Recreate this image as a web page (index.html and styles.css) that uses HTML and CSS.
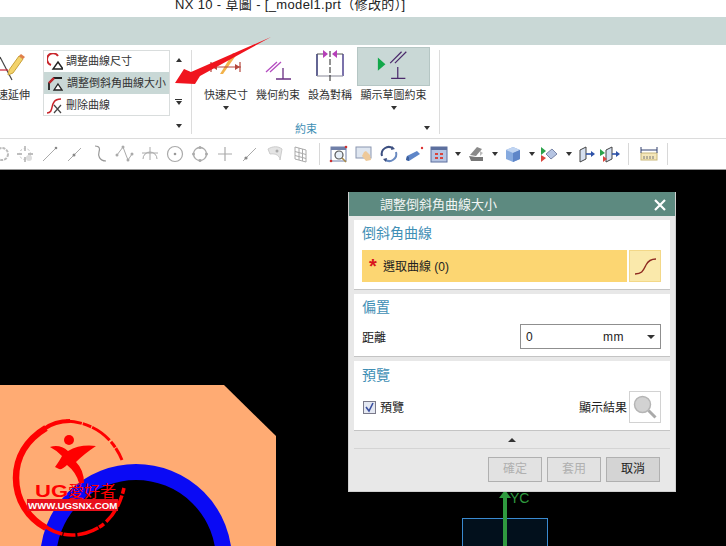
FILE: index.html
```html
<!DOCTYPE html>
<html lang="zh-Hant">
<head>
    <meta charset="UTF-8">
    <title>NX 10 - 草圖</title>
    <link rel="stylesheet" href="styles.css">
</head>
<body>
<div class="page">
    <div class="titlebar">NX 10 - 草圖 - [_model1.prt（修改的）]</div>
    <div class="tabband"></div>

    <div class="ribbon">
        <div class="tool tool-clipped">
            <svg class="tool-icon" width="44" height="39" viewBox="0 0 44 39">
                <path d="M14 10l12 23" stroke="#444" stroke-width="1.2" fill="none"/>
                <path d="M14 23h8" stroke="#c23" stroke-width="1.200" fill="none"/>
                <path d="M22 28l1-5 10-14 4 3-10 14z" fill="#f3d36b" stroke="#c9a23c" stroke-width="1"/>
                <path d="M33 9l2-2 4 3-2 2z" fill="#e07f4a"/>
            </svg>
            <span class="tool-label">快速延伸</span>
        </div>

        <div class="gallery">
            <div class="gallery-row gallery-row-first">
                <svg width="16" height="18" viewBox="0 0 16 18"><path d="M11 3a6 6 0 1 0-7 9" fill="none" stroke="#c8262c" stroke-width="2"/><path d="M11 9l5 7H6z" fill="#fff" stroke="#222" stroke-width="1.4"/></svg>
                <span>調整曲線尺寸</span>
            </div>
            <div class="gallery-row gallery-row-on">
                <svg width="16" height="18" viewBox="0 0 16 18"><path d="M2 16V9l5-5h8" fill="none" stroke="#222" stroke-width="1.8"/><path d="M2 9l5-5" stroke="#c8262c" stroke-width="2.4"/><path d="M11 10l4 6H7z" fill="#fff" stroke="#222" stroke-width="1.3"/></svg>
                <span>調整倒斜角曲線大小</span>
            </div>
            <div class="gallery-row">
                <svg width="16" height="18" viewBox="0 0 16 18"><path d="M0 17c6 0 4-7 7-11 2-3 5-3 7-3" fill="none" stroke="#c8262c" stroke-width="1.5"/><path d="M7 9l7 8M14 9l-7 8" stroke="#444" stroke-width="1.2"/></svg>
                <span>刪除曲線</span>
            </div>
        </div>

        <div class="gallery-arrows">
            <i class="tri tri-up"></i>
            <i class="tri tri-down tri-bar"></i>
            <i class="tri tri-down"></i>
        </div>

        <div class="group">
            <div class="tools">
                <div class="tool">
                    <svg class="tool-icon" width="44" height="39" viewBox="0 0 44 39">
                        <path d="M29 6l4 1-14 20-3 0z" fill="#f2b24a"/>
                        <path d="M7 20h30M7 15v10M36 15v10" stroke="#b5473c" stroke-width="1.2" fill="none"/>
                        <path d="M8 20l5-3v6zM36 20l-5-3v6z" fill="#b5473c"/>
                    </svg>
                    <span class="tool-label">快速尺寸</span>
                    <i class="tri tri-down"></i>
                </div>
                <div class="tool">
                    <svg class="tool-icon" width="44" height="39" viewBox="0 0 44 39">
                        <path d="M10 25l11-10M14 25l11-10" stroke="#b44cc0" stroke-width="1.3" fill="none"/>
                        <path d="M20 32h15M27 21v11" stroke="#6a2f83" stroke-width="1.3" fill="none"/>
                    </svg>
                    <span class="tool-label">幾何約束</span>
                </div>
                <div class="tool">
                    <svg class="tool-icon" width="44" height="39" viewBox="0 0 44 39">
                        <path d="M9 7v22" stroke="#3d3f78" stroke-width="1.6" fill="none"/>
                        <path d="M35 7v22" stroke="#5a4f96" stroke-width="1.6" fill="none"/>
                        <path d="M9 29h26" stroke="#9a9aa8" stroke-width="1.2" fill="none"/>
                        <path d="M9 7h6M29 7h6" stroke="#555" stroke-width="1" fill="none"/>
                        <path d="M22 4v30" stroke="#222" stroke-width="1" stroke-dasharray="6 2" fill="none"/>
                        <path d="M15 3l5 4-5 4zM29 3l-5 4 5 4z" fill="#b540b8"/>
                    </svg>
                    <span class="tool-label">設為對稱</span>
                </div>
                <div class="tool tool-wide">
                    <svg class="tool-icon tool-icon-on" width="73" height="39" viewBox="0 0 73 39">
                        <path d="M20 10l8 7-8 7z" fill="#12a84a"/>
                        <path d="M33 16l12-12M38 16l12-12" stroke="#4b2a6b" stroke-width="1.3" fill="none"/>
                        <path d="M34 32h15M41 20v12" stroke="#4b2a6b" stroke-width="1.3" fill="none"/>
                    </svg>
                    <span class="tool-label">顯示草圖約束</span>
                    <i class="tri tri-down"></i>
                </div>
            </div>
            <div class="group-foot">
                <span class="group-name">約束</span>
                <i class="tri tri-down"></i>
            </div>
        </div>
    </div>

    <div class="toolbar">
        <svg class="tb-first" width="12" height="20" viewBox="12 0 12 20"><circle cx="14" cy="10" r="6" fill="none" stroke="#bbb" stroke-width="2" stroke-dasharray="3 1"/></svg>
        <svg class="tb" viewBox="0 0 24 20"><path d="M12 2v5M12 18v-5M4 10h5M20 10h-5" stroke="#aaa" stroke-width="1.400"/><circle cx="12" cy="10" r="5.500" fill="none" stroke="#bbb" stroke-dasharray="2 2"/><circle cx="16" cy="14" r="3" fill="#ddd"/></svg>
        <svg class="tb" viewBox="0 0 24 20"><path d="M5 17L18 4" stroke="#aaa" stroke-width="1"/><circle cx="18" cy="4" r="1.300" fill="#888"/></svg>
        <svg class="tb" viewBox="0 0 24 20"><path d="M5 17L18 4" stroke="#aaa" stroke-width="1"/><circle cx="11" cy="11" r="1.500" fill="#888"/></svg>
        <svg class="tb" viewBox="0 0 24 20"><path d="M7 2c5 0 5 3 4 6s0 9 7 9" fill="none" stroke="#999" stroke-width="1.200"/></svg>
        <svg class="tb" viewBox="0 0 24 20"><path d="M4 11l6-8 3 8 2 5 4-6" fill="none" stroke="#aaa"/><circle cx="10" cy="3" r="1.500" fill="#aaa"/><circle cx="4" cy="11" r="1.500" fill="#aaa"/><circle cx="15" cy="16" r="1.500" fill="#aaa"/><circle cx="19" cy="10" r="1.500" fill="#aaa"/></svg>
        <svg class="tb" viewBox="0 0 24 20"><path d="M5 15a7 7 0 0 1 14 0M12 3v13M4 9h16" fill="none" stroke="#aaa"/></svg>
        <svg class="tb" viewBox="0 0 24 20"><circle cx="12" cy="10" r="7.500" fill="none" stroke="#aaa" stroke-width="1.200"/><circle cx="12" cy="10" r="1.300" fill="#999"/></svg>
        <svg class="tb" viewBox="0 0 24 20"><circle cx="12" cy="10" r="6.500" fill="none" stroke="#aaa" stroke-width="1.300"/><circle cx="12" cy="3.500" r="1.500" fill="#aaa"/><circle cx="5.500" cy="10" r="1.500" fill="#aaa"/><circle cx="18.500" cy="10" r="1.500" fill="#aaa"/><circle cx="12" cy="16.500" r="1.500" fill="#aaa"/></svg>
        <svg class="tb" viewBox="0 0 24 20"><path d="M12 3v14M5 10h14" stroke="#aaa" stroke-width="1.200"/></svg>
        <svg class="tb" viewBox="0 0 24 20"><path d="M5 17L18 4" stroke="#aaa"/><circle cx="8" cy="14" r="1.600" fill="#888"/></svg>
        <svg class="tb" viewBox="0 0 24 20"><path d="M5 5c5-3 10-3 14 0l-2 11c0-4-4-7-10-6z" fill="#e4e4e4" stroke="#ccc"/><circle cx="14" cy="7" r="1.500" fill="#aaa"/></svg>
        <svg class="tb" viewBox="0 0 24 20"><path d="M7 3l11 3v12l-11-3zM7 7.500l11 3M7 11.500l11 3M11 4v12M14.500 5v12" fill="none" stroke="#aaa"/></svg>
        <i class="tb-sep"></i>
        <svg class="tb" viewBox="0 0 24 20"><rect x="4" y="3" width="15" height="14" fill="#fff" stroke="#6f7fa8"/><path d="M4 3h15v3H4z" fill="#6f7fa8"/><circle cx="12" cy="11" r="4" fill="#e6eef7" stroke="#555" stroke-width="1.200"/><path d="M15 14l4 4" stroke="#a98a4a" stroke-width="1.600"/><circle cx="4" cy="17" r="1.300" fill="#c33"/><circle cx="19" cy="3" r="1.300" fill="#c33"/></svg>
        <svg class="tb" viewBox="3 0 24 20"><rect x="7" y="3" width="15" height="11" fill="#dfe6f0" stroke="#8a96b0"/><path d="M15 8l2-1 4 4 1 5-5 1-4-5z" fill="#eec99a"/></svg>
        <svg class="tb" viewBox="0 0 24 20"><path d="M5 12A7 7 0 0 1 16 4.500" fill="none" stroke="#3c4f80" stroke-width="2"/><path d="M19 8A7 7 0 0 1 8 15.500" fill="none" stroke="#6a8ac0" stroke-width="2"/><path d="M15 2l3 3-4 1zM9 18l-3-3 4-1z" fill="#3c4f80"/></svg>
        <svg class="tb" viewBox="0 0 24 20"><path d="M5 12l10-5 3 3-11 7-3-1z" fill="#5f86c8"/><path d="M5 12l2 1v4l-3-1z" fill="#3e5f9c"/><circle cx="20" cy="4" r="1.200" fill="#d33"/></svg>
        <svg class="tb-menu" viewBox="0 0 24 20"><rect x="4" y="3" width="16" height="15" fill="#b5c4e2" stroke="#5c6f9e"/><path d="M4 3h16v3H4z" fill="#5c6f9e"/><path d="M8 9h3v2H8zM13 9h3v2h-3zM8 13h3v2H8zM13 13h3v2h-3z" fill="#d9443c"/></svg>
        <i class="tri tri-down tb-arrow"></i>
        <svg class="tb-menu" viewBox="0 0 24 20"><path d="M6 11l7-8 5 2-6 7z" fill="#8a8a8a"/><path d="M5 12l7 1 7 0v4H7z" fill="#777"/><path d="M16 7l3 2-3 3z" fill="#bbb"/></svg>
        <i class="tri tri-down tb-arrow"></i>
        <svg class="tb-menu" viewBox="0 0 24 20"><path d="M5 6l7-3 7 3v9l-7 3-7-3z" fill="#86aadf"/><path d="M5 6l7 3 7-3-7-3z" fill="#c1d5f2"/><path d="M12 9v9l7-3V6z" fill="#5f86c8"/></svg>
        <i class="tri tri-down tb-arrow"></i>
        <svg class="tb-menu" viewBox="2 0 24 20"><path d="M10 10l6-5 5 5-6 5z" fill="#b5c4e2" stroke="#7a86a8"/><path d="M5 3l5 4-5 4z" fill="#2aa24a"/><path d="M5 11l5 3-5 4z" fill="#d9443c"/></svg>
        <i class="tri tri-down tb-arrow"></i>
        <svg class="tb-menu" viewBox="1 0 24 20"><path d="M6 6l6-3v12l-6 3z" fill="#d6e0f0" stroke="#444"/><path d="M12 10h6" stroke="#2d52a8" stroke-width="1.600"/><path d="M21 10l-4-3v6z" fill="#2d52a8"/></svg>
        <svg class="tb" viewBox="2 0 24 20"><path d="M9 6l6-3v12l-6 3z" fill="#d6e0f0" stroke="#444"/><path d="M15 10h6" stroke="#2d52a8" stroke-width="1.600"/><path d="M23 10l-4-3v6z" fill="#2d52a8"/><path d="M3 5l5 4-5 3z" fill="#2aa24a"/><path d="M6 12l4 3-4 3z" fill="#d9443c"/></svg>
        <i class="tb-sep tb-sep-2"></i>
        <svg class="tb" viewBox="0 0 24 20"><rect x="4" y="9" width="16" height="7" fill="#f5e7ba" stroke="#c9b77a"/><path d="M4 6h16M4 3v6M20 3v6" stroke="#33406e" fill="none"/><path d="M7 12v3M10 12v3M13 12v3M16 12v3" stroke="#777"/></svg>
        <i class="tb-sep tb-sep-3"></i>
    </div>

    <div class="viewport">
        <svg class="scene" width="726" height="376" viewBox="0 170 726 376">
            <path d="M0 385H224L276 436V546H0Z" fill="#ffab73"/>
            <circle cx="136" cy="560" r="88" fill="#000" stroke="#0a0af5" stroke-width="16"/>
            <path d="M505 546V498" stroke="#2f9a3f" stroke-width="4"/>
            <path d="M505 490l6 8h-12z" fill="#2f9a3f"/>
            <text class="axis-label" x="510" y="503">YC</text>
            <rect x="462.500" y="518.500" width="85" height="40" fill="#02101c" stroke="#3a8ad0"/>
            <path d="M505 518V546" stroke="#2f9a3f" stroke-width="4"/>

            <!-- watermark -->
            <path d="M46 428C26 440 16 458 16 478C16 500 28 518 46 528" fill="none" stroke="#f00" stroke-width="6.500"/>
            <path d="M44 429C52 423 60 421 70 421" fill="none" stroke="#f00" stroke-width="4"/>
            <path d="M66 421C92 422 112 436 122 460" fill="none" stroke="#f00" stroke-width="3" stroke-dasharray="16 1 9 1 22 2 7 1"/>
            <path d="M46 527C58 535 72 537 86 533C104 528 118 514 124 488" fill="none" stroke="#f00" stroke-width="3.500" stroke-dasharray="18 1 12 2 22 1 6 3"/>
            <circle cx="69" cy="440" r="5" fill="#f00"/>
            <path d="M50 447Q60 444 68 451Q80 444 96 446Q84 454 76 462Q84 470 84 483L79 483Q76 472 67 465Q62 470 59 469L55 467Q60 460 62 456Q56 450 50 447Z" fill="#f00"/>
            <rect x="27" y="499" width="91" height="12" fill="#e8101c"/>
            <text class="logo-name" x="35" y="497" textLength="33" lengthAdjust="spacingAndGlyphs">UG</text>
            <text class="logo-name logo-name-cjk" x="68" y="497">愛好者</text>
            <text class="logo-url" x="28" y="508.500">WWW.UGSNX.COM</text>
        </svg>

        <div class="dialog">
            <div class="dialog-title">
                <span class="dialog-name">調整倒斜角曲線大小</span>
                <svg class="dialog-close" width="12" height="12" viewBox="0 0 12 12"><path d="M1 1l10 10M11 1L1 11" stroke="#fff" stroke-width="2.200"/></svg>
            </div>
            <div class="dialog-body">
                <section class="panel panel-curve">
                    <h2>倒斜角曲線</h2>
                    <div class="select-row">
                        <div class="select-field"><b class="req">*</b><span class="select-text">選取曲線 (0)</span></div>
                        <div class="select-btn">
                            <svg width="24" height="20" viewBox="0 0 24 20"><path d="M2 18c7 0 8-3 11-9 2-4 5-6 10-6" fill="none" stroke="#8e2a20" stroke-width="1.300"/></svg>
                        </div>
                    </div>
                </section>
                <section class="panel panel-offset">
                    <h2>偏置</h2>
                    <div class="offset-row">
                        <span>距離</span>
                        <div class="offset-field"><span class="offset-value">0</span><span class="offset-unit">mm</span><i class="tri tri-down tri-dark"></i></div>
                    </div>
                </section>
                <section class="panel panel-preview">
                    <h2>預覽</h2>
                    <div class="preview-row">
                        <i class="check">
                            <svg width="11" height="11" viewBox="0 0 11 11"><path d="M2 5l3 4 4-8" fill="none" stroke="#3a4fa0" stroke-width="1.600"/></svg>
                        </i>
                        <span class="check-label">預覽</span>
                        <span class="result-label">顯示結果</span>
                        <div class="result-btn">
                            <svg width="26" height="26" viewBox="0 0 26 26"><circle cx="10.500" cy="10.500" r="8" fill="#d2d2d2" stroke="#b5b5b5" stroke-width="1.500"/><path d="M16.500 16.500l7 7" stroke="#aaa" stroke-width="3"/></svg>
                        </div>
                    </div>
                </section>
                <div class="collapse"><i class="tri tri-up tri-dark"></i></div>
                <div class="actions">
                    <span class="btn btn-off">確定</span>
                    <span class="btn btn-off">套用</span>
                    <span class="btn">取消</span>
                </div>
            </div>
        </div>
    </div>

    <svg class="callout" width="726" height="120" viewBox="0 0 726 120">
        <path d="M175 83L184 69L191 72L271 37L200 76L195 84Z" fill="#f0141e"/>
    </svg>
</div>
</body>
</html>
```

FILE: styles.css
```css
* {
    box-sizing: border-box;
}
body {
    margin: 0;
    font-family: "Liberation Sans", "Noto Sans CJK TC", sans-serif;
    font-size: 11px;
    color: #333;
    background: #fff;
}
.page {
    position: relative;
    display: flex;
    flex-direction: column;
    width: 726px;
    height: 546px;
    overflow: hidden;
}
.titlebar {
    height: 17px;
    padding-left: 175px;
    font-size: 13px;
    letter-spacing: .35px;
    line-height: 10px;
    color: #222;
    white-space: nowrap;
}
.tabband {
    height: 28px;
    background: #c9d8d6;
}

/* ribbon */
.ribbon {
    display: flex;
    height: 94px;
    background: #fff;
    border-bottom: 1px solid #dcdcdc;
}
.tool {
    display: flex;
    flex-direction: column;
    align-items: center;
    width: 44px;
}
.tool-clipped {
    flex: none;
    margin-left: -14px;
    padding-top: 2px;
}
.tool-icon {
    flex: none;
}
.tool-icon-on {
    background: #c9d8d6;
    border: 1px solid #b5c6c4;
}
.tool-label {
    margin-top: 2px;
    line-height: 14px;
    white-space: nowrap;
}
.tool-wide {
    width: 73px;
}
.tool .tri {
    margin-top: 4px;
}
.gallery {
    flex: none;
    width: 127px;
    height: 66px;
    margin: 5px 0 0 13px;
    border: 1px solid #d9dddd;
}
.gallery-row {
    display: flex;
    align-items: center;
    gap: 3px;
    height: 21px;
    padding-left: 3px;
    white-space: nowrap;
}
.gallery-row span {
    margin-top: -2px;
}
.gallery-row-first span {
    margin-top: -4px;
}
.gallery-row-on {
    height: 22px;
    gap: 4px;
    background: #c9d8d6;
}
.gallery-arrows {
    flex: none;
    display: flex;
    flex-direction: column;
    align-items: center;
    width: 21px;
    padding: 13px 4px 0 0;
}
.gallery-arrows .tri-bar {
    margin-top: 39px;
}
.gallery-arrows .tri:last-child {
    margin-top: 19px;
}
.group {
    flex: none;
    display: flex;
    flex-direction: column;
    width: 249px;
    height: 84px;
    margin-top: 5px;
    border-left: 1px solid #dcdcdc;
    border-right: 1px solid #dcdcdc;
}
.tools {
    flex: none;
    display: flex;
    gap: 8px;
    height: 75px;
    margin-top: -3px;
    padding-left: 12px;
}
.tools .tool-wide {
    margin-left: -3px;
}
.group-foot {
    flex: none;
    display: flex;
    align-items: center;
    justify-content: space-between;
    height: 12px;
    padding: 0 9px 0 103px;
}
.group-name {
    color: #3f8fb5;
}
.tri {
    display: block;
    flex: none;
    width: 0;
    height: 0;
    border-left: 3.5px solid transparent;
    border-right: 3.5px solid transparent;
}
.tri-down {
    border-top: 4px solid #333;
}
.tri-up {
    border-bottom: 4px solid #333;
}
.tri-bar {
    position: relative;
}
.tri-bar::before {
    content: "";
    position: absolute;
    left: -3.5px;
    top: -6px;
    width: 7px;
    height: 1px;
    background: #333;
}

/* toolbar */
.toolbar {
    display: flex;
    align-items: center;
    height: 31px;
    background: #fff;
    border-bottom: 1px solid #999;
}
.toolbar svg {
    flex: none;
}
.tb-first {
    margin-right: 1px;
}
.tb {
    width: 24px;
    height: 20px;
    margin-right: 1px;
}
.tb-menu {
    width: 24px;
    height: 20px;
}
.tb-arrow {
    margin: 0 3px 0 4px;
}
.tb-sep {
    flex: none;
    width: 1px;
    height: 22px;
    margin: 0 7px 0 6px;
    background: #d8d8d8;
}
.tb-sep-2 {
    margin: 0 8px 0 4px;
}
.tb-sep-3 {
    margin: 0 0 0 5px;
}

/* sketch area */
.viewport {
    position: relative;
    flex: 1;
    background: #000;
}
.scene {
    display: block;
}
.axis-label {
    font-size: 14px;
    fill: #2f9a3f;
}
.logo-name {
    font-size: 16px;
    font-weight: bold;
    fill: #f00;
}
.logo-name-cjk {
    font-weight: normal;
}
.logo-url {
    font-size: 9.7px;
    font-weight: bold;
    fill: #fff;
}
.callout {
    position: absolute;
    left: 0;
    top: 0;
}

/* dialog */
.dialog {
    position: absolute;
    left: 348px;
    top: 22px;
    width: 328px;
    height: 300px;
    background: #e8e8e8;
    border: 1px solid #cfcfcf;
    border-top: 0;
}
.dialog-title {
    display: flex;
    align-items: center;
    justify-content: space-between;
    height: 24px;
    padding: 0 9px 0 31px;
    font-size: 13px;
    color: #f2f5f4;
    background: #5d8a80;
}
.dialog-name {
    margin-top: -2px;
}
.dialog-close {
    margin-top: 2px;
}
.dialog-body {
    padding: 4px 5px 0;
}
.panel {
    margin-bottom: 4px;
    padding: 5px 9px 0 8px;
    background: #fff;
    border-bottom: 1px solid #c4c4c4;
}
.panel h2 {
    margin: 0;
    font-size: 14px;
    font-weight: normal;
    line-height: 17px;
    color: #3f8fb5;
}
.panel-curve {
    height: 70px;
}
.panel-offset {
    height: 63px;
}
.panel-preview {
    height: 70px;
    padding-top: 6px;
}
.select-row {
    display: flex;
    gap: 2px;
    margin-top: 8px;
}
.select-field {
    display: flex;
    align-items: center;
    flex: 1;
    height: 32px;
    padding-left: 7px;
    font-size: 12px;
    color: #222;
    background: #fcd672;
}
.req {
    width: 14px;
    font-size: 20px;
    line-height: 20px;
    color: #d8141c;
}
.select-text {
    margin-top: -2px;
}
.select-btn {
    display: flex;
    align-items: center;
    justify-content: center;
    width: 32px;
    height: 32px;
    background: #fae9ab;
    border: 1px solid #f3d888;
}
.offset-row {
    display: flex;
    align-items: center;
    justify-content: space-between;
    margin-top: 8px;
    font-size: 12px;
    color: #222;
}
.offset-field {
    display: flex;
    align-items: center;
    width: 141px;
    height: 25px;
    padding: 0 5px;
    border: 1px solid #8f8f8f;
}
.offset-value {
    flex: 1;
}
.offset-unit {
    margin-right: 23px;
    letter-spacing: .5px;
}
.tri-dark {
    border-left-width: 4px;
    border-right-width: 4px;
}
.preview-row {
    display: flex;
    align-items: center;
    margin-top: 7px;
    font-size: 12px;
    color: #222;
}
.check {
    display: flex;
    align-items: center;
    justify-content: center;
    width: 13px;
    height: 13px;
    margin-left: 1px;
    background: #e4e8f2;
    border: 1px solid #7a7a8a;
}
.check-label {
    flex: 1;
    margin: -2px 0 0 4px;
}
.result-label {
    margin: -2px 2px 0 0;
}
.result-btn {
    display: flex;
    align-items: center;
    justify-content: center;
    width: 32px;
    height: 32px;
    border: 1px solid #d2d2d2;
}
.collapse {
    display: flex;
    align-items: center;
    justify-content: center;
    height: 18px;
    margin-top: -4px;
    border-bottom: 1px solid #d4d4d4;
}
.actions {
    display: flex;
    justify-content: flex-end;
    gap: 5px;
    padding: 8px 10px 0 0;
}
.btn {
    width: 54px;
    height: 25px;
    font-size: 12px;
    line-height: 23px;
    text-align: center;
    color: #222;
    background: #d4d4d4;
    border: 1px solid #b0b0b0;
}
.btn-off {
    color: #b0b0b0;
    background: #e2e2e2;
}
```
